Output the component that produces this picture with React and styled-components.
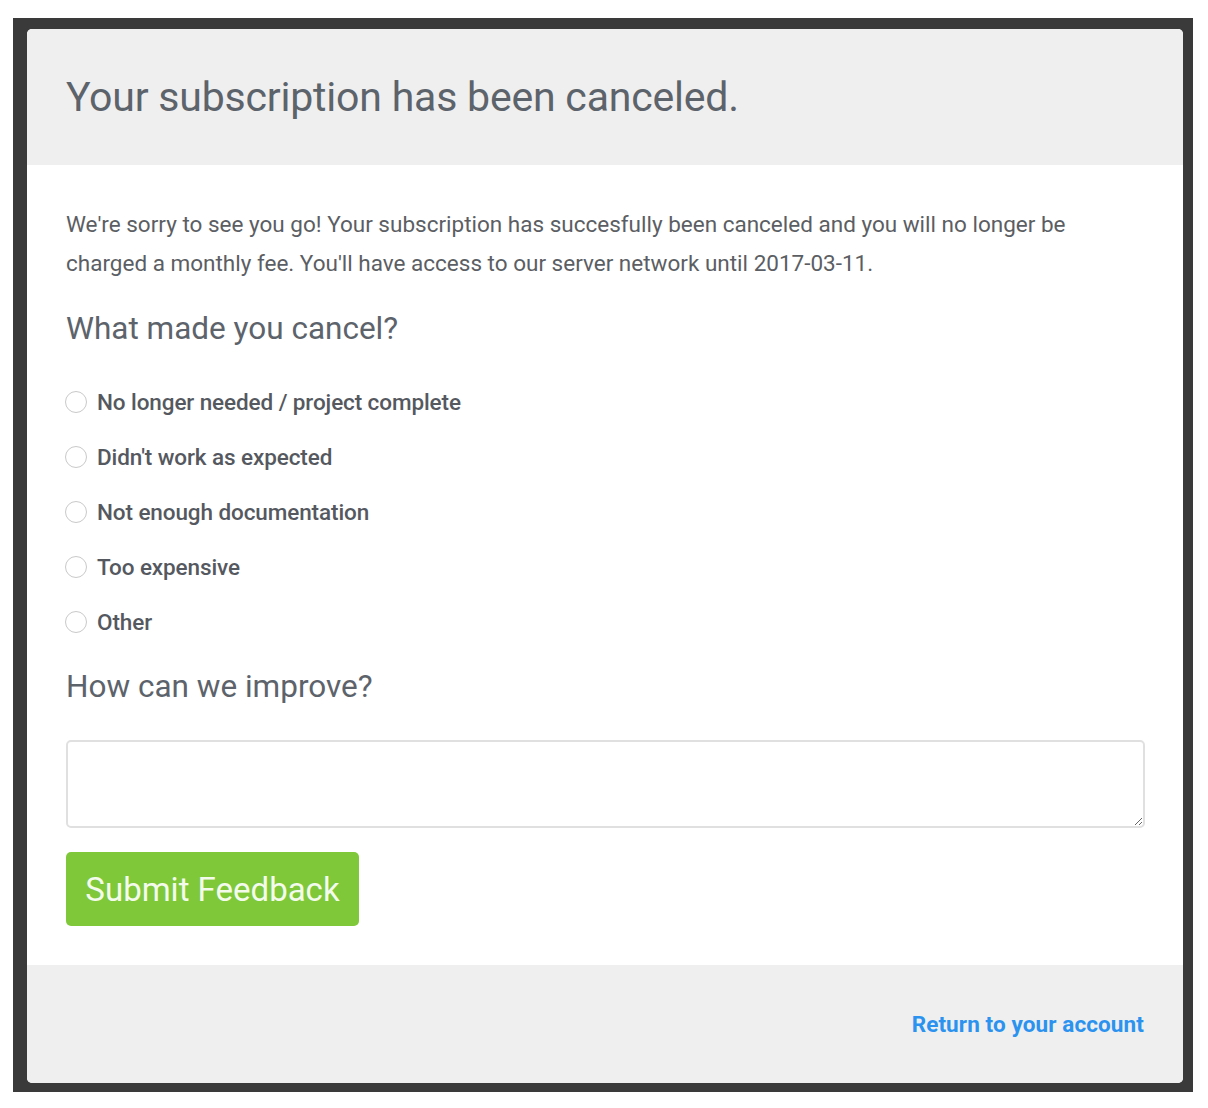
import React from 'react'
import styled, { createGlobalStyle } from 'styled-components';

const GlobalStyle = createGlobalStyle`
    html, body {
        margin: 0;
        background: #fff;
        font-family: Roboto, "Liberation Sans", sans-serif;
    }
    * { box-sizing: border-box; }
`;

const reasons = [
    'No longer needed / project complete',
    "Didn't work as expected",
    'Not enough documentation',
    'Too expensive',
    'Other',
];

const App = () => {
    return (
        <Page>
            <GlobalStyle />
            <Backdrop>
                <Modal>
                    <Header>
                        <Title>Your subscription has been canceled.</Title>
                    </Header>
                    <Body>
                        <Intro>
                            We're sorry to see you go! Your subscription has succesfully been canceled and you will no longer be<br />
                            charged a monthly fee. You'll have access to our server network until 2017-03-11.
                        </Intro>
                        <Question>What made you cancel?</Question>
                        <Reasons>
                            {reasons.map((r) => (
                                <Reason key={r}>
                                    <Radio type="radio" name="reason" />
                                    <span>{r}</span>
                                </Reason>
                            ))}
                        </Reasons>
                        <Question $improve>How can we improve?</Question>
                        <Feedback />
                        <SubmitBtn>Submit Feedback</SubmitBtn>
                    </Body>
                    <Footer>
                        <ReturnLink href="#">Return to your account</ReturnLink>
                    </Footer>
                </Modal>
            </Backdrop>
        </Page>
    )
}

const Page = styled.div`
    width: 1208px;
    height: 1108px;
    padding: 18px 15px 16px 13px;
`;

const Backdrop = styled.div`
    background: #3a3a3a;
    padding: 11px 10px 9px 14px;
    height: 100%;
`;

const Modal = styled.div`
    background: #fff;
    border-radius: 5px;
    overflow: hidden;
    display: flex;
    flex-direction: column;
    height: 100%;
`;

const Header = styled.div`
    height: 136px;
    background: #efefef;
    display: flex;
    align-items: center;
    padding: 0 39px;
`;

const Title = styled.h1`
    margin: 0;
    font-size: 41px;
    font-weight: 400;
    color: #5d636b;
    letter-spacing: -0.2px;
`;

const Body = styled.div`
    padding: 40px 38px 39px 39px;
    display: flex;
    flex-direction: column;
    align-items: flex-start;
`;

const Intro = styled.p`
    margin: 0;
    font-size: 22.5px;
    line-height: 39px;
    color: #5b5e63;
    white-space: nowrap;
`;

const Question = styled.h2`
    margin: ${(p) => (p.$improve ? '20px' : '28px')} 0 0;
    font-size: 31.5px;
    line-height: 36px;
    font-weight: 400;
    color: #5d636b;
`;

const Reasons = styled.div`
    margin-top: 27px;
    display: flex;
    flex-direction: column;
`;

const Reason = styled.label`
    height: 55px;
    display: flex;
    align-items: center;
    gap: 10px;
    margin-left: -1px;
    font-size: 22.5px;
    font-weight: 500;
    color: #55595f;
    letter-spacing: -0.1px;
`;

const Radio = styled.input`
    appearance: none;
    margin: 0;
    width: 22px;
    height: 22px;
    border-radius: 50%;
    border: 1.5px solid #c9c9c9;
    background: #fff;
`;

const Feedback = styled.textarea`
    margin-top: 35px;
    width: 100%;
    height: 88px;
    border: 2px solid #e0e0e0;
    border-radius: 5px;
    font: inherit;
`;

const SubmitBtn = styled.button`
    margin-top: 24px;
    width: 293px;
    height: 74px;
    border: none;
    border-radius: 5px;
    background: #7ec83a;
    color: #f4fbec;
    font-family: Roboto, "Liberation Sans", sans-serif;
    font-size: 33px;
    font-weight: 400;
    cursor: pointer;
`;

const Footer = styled.div`
    flex: 1;
    background: #efefef;
    display: flex;
    justify-content: flex-end;
    align-items: center;
    padding: 0 39px 0;
`;

const ReturnLink = styled.a`
    color: #2b93ef;
    font-size: 22.5px;
    font-weight: 700;
    text-decoration: none;
    letter-spacing: 0.1px;
`;

export default App;
